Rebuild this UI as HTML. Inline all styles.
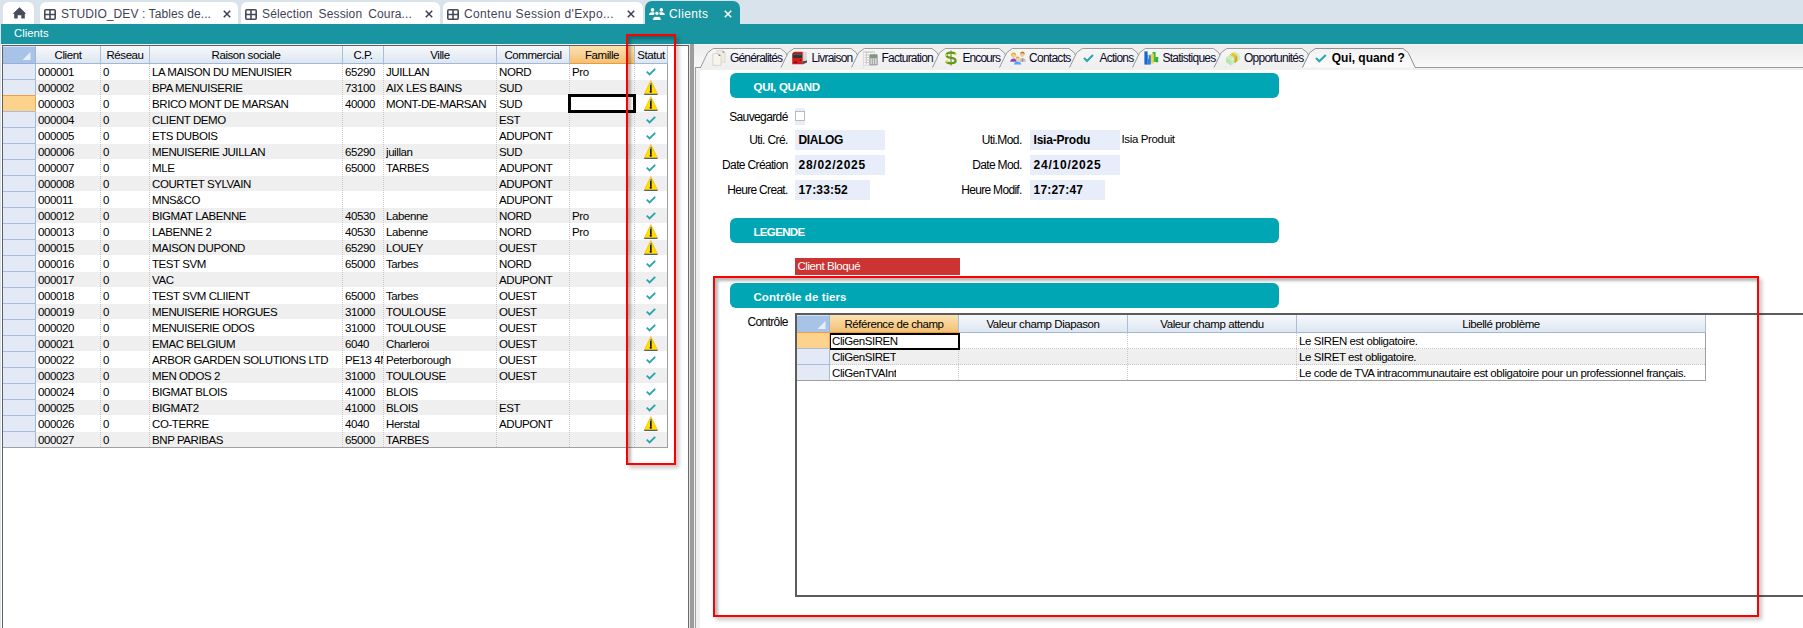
<!DOCTYPE html><html><head><meta charset="utf-8"><style>
*{box-sizing:border-box;margin:0;padding:0}
html,body{width:1803px;height:628px;overflow:hidden;background:#d9e3eb;font-family:"Liberation Sans",sans-serif;position:relative}
.a{position:absolute}
svg{display:block}
.tab{position:absolute;top:2px;height:22px;background:#fff;border-radius:6px 6px 0 0;}
.tt{position:absolute;top:7px;font-size:12.3px;color:#3e4454;white-space:nowrap;letter-spacing:0.1px}
.tx{position:absolute;top:3px;font-size:14px;color:#3e4454}
.gt{position:absolute;font-size:11.5px;letter-spacing:-0.42px;color:#000;white-space:nowrap;overflow:hidden}
.hd{position:absolute;top:46px;height:18px;background:linear-gradient(#f7f9fc,#dde6f1);border-bottom:1px solid #9fb8d6;font-size:11.5px;letter-spacing:-0.42px;text-align:center;line-height:18px;color:#000}
.vd{position:absolute;width:1px;background-image:linear-gradient(#c8c8c8 50%,transparent 50%);background-size:1px 2px}
.lbl{position:absolute;font-size:11.5px;letter-spacing:-0.3px;color:#000;text-align:right;white-space:nowrap}
.fld{position:absolute;background:#e8eef9;font-size:12px;font-weight:bold;color:#000;padding-left:3px;line-height:20px;white-space:nowrap}
.ban{position:absolute;left:730px;width:549px;height:25px;background:#00a6b4;border-radius:6px;color:#fff;font-weight:bold;font-size:12px;line-height:25px;padding-left:23px;padding-top:2px}
.rt{position:absolute;top:52px;font-size:12px;letter-spacing:-0.3px;color:#0a0a28;white-space:nowrap}
</style></head><body>
<div class="tab" style="left:3px;width:31px"></div><svg class="a" style="left:12px;top:7px" width="15" height="12" viewBox="0 0 15 12"><path d="M7.5 0.2 L14.3 6.8 L12.8 6.8 L12.8 11.6 L9.3 11.6 L9.3 8.3 L5.7 8.3 L5.7 11.6 L2.2 11.6 L2.2 6.8 L0.7 6.8 Z" fill="#484c5a"/></svg><div class="tab" style="left:40px;width:198px"></div><svg class="a" style="left:44px;top:9px" width="12" height="11" viewBox="0 0 12 11"><rect x="0.8" y="0.8" width="10.4" height="9.4" rx="1" fill="none" stroke="#454a58" stroke-width="1.6"/><path d="M6 1 V10 M1 5.5 H11" stroke="#454a58" stroke-width="1.6"/></svg><div class="a" style="left:61px;top:7px;font-size:12px;font-weight:400;letter-spacing:0.086px;color:#3e4356;white-space:nowrap;">STUDIO_DEV : Tables de...</div><svg class="a" style="left:223px;top:10px" width="8" height="8" viewBox="0 0 8 8"><path d="M0.8 0.8 L7.2 7.2 M7.2 0.8 L0.8 7.2" stroke="#3e4454" stroke-width="1.6"/></svg><div class="tab" style="left:241px;width:199px"></div><svg class="a" style="left:245px;top:9px" width="12" height="11" viewBox="0 0 12 11"><rect x="0.8" y="0.8" width="10.4" height="9.4" rx="1" fill="none" stroke="#454a58" stroke-width="1.6"/><path d="M6 1 V10 M1 5.5 H11" stroke="#454a58" stroke-width="1.6"/></svg><div class="a" style="left:262px;top:7px;font-size:12px;font-weight:400;letter-spacing:0.138px;color:#3e4356;white-space:nowrap;word-spacing:2.5px;">Sélection Session Coura...</div><svg class="a" style="left:425px;top:10px" width="8" height="8" viewBox="0 0 8 8"><path d="M0.8 0.8 L7.2 7.2 M7.2 0.8 L0.8 7.2" stroke="#3e4454" stroke-width="1.6"/></svg><div class="tab" style="left:443px;width:200px"></div><svg class="a" style="left:447px;top:9px" width="12" height="11" viewBox="0 0 12 11"><rect x="0.8" y="0.8" width="10.4" height="9.4" rx="1" fill="none" stroke="#454a58" stroke-width="1.6"/><path d="M6 1 V10 M1 5.5 H11" stroke="#454a58" stroke-width="1.6"/></svg><div class="a" style="left:464px;top:7px;font-size:12px;font-weight:400;letter-spacing:0.358px;color:#3e4356;white-space:nowrap;">Contenu Session d'Expo...</div><svg class="a" style="left:627px;top:10px" width="8" height="8" viewBox="0 0 8 8"><path d="M0.8 0.8 L7.2 7.2 M7.2 0.8 L0.8 7.2" stroke="#3e4454" stroke-width="1.6"/></svg><div class="tab" style="left:645px;top:1px;height:23px;width:95px;background:#1895a0;border-radius:7px 7px 0 0"></div><svg class="a" style="left:649px;top:8px" width="16" height="12" viewBox="0 0 16 12"><circle cx="3.5" cy="1.9" r="1.8" fill="#fff"/><circle cx="12.3" cy="1.9" r="1.8" fill="#fff"/><path d="M0 7 Q0 4.3 3 4.3 H4.2 Q5.6 4.3 6.2 5.2 Q5 6 4.9 7Z" fill="#fff"/><path d="M15.8 7 Q15.8 4.3 12.8 4.3 H11.6 Q10.2 4.3 9.6 5.2 Q10.8 6 10.9 7Z" fill="#fff"/><circle cx="7.9" cy="5.3" r="2.1" fill="#fff" stroke="#1895a0" stroke-width="0.9"/><path d="M3.6 12.5 Q3.6 8.4 6.6 8.4 H9.2 Q12.2 8.4 12.2 12.5Z" fill="#fff" stroke="#1895a0" stroke-width="0.9"/></svg><div class="a" style="left:669px;top:7px;font-size:12px;font-weight:400;letter-spacing:0.402px;color:#fff;white-space:nowrap;">Clients</div><svg class="a" style="left:724px;top:10px" width="8" height="8" viewBox="0 0 8 8"><path d="M0.8 0.8 L7.2 7.2 M7.2 0.8 L0.8 7.2" stroke="#fff" stroke-width="1.6"/></svg><div class="a" style="left:1px;top:24px;width:1802px;height:20px;background:#1895a0"></div><div class="a" style="left:14px;top:27px;font-size:11.3px;color:#fff">Clients</div><div class="a" style="left:1px;top:44px;width:688px;height:584px;background:#fff;border-top:1px solid #f4efee"></div><div class="a" style="left:2px;top:45px;width:687px;height:583px;border-left:1px solid #5f5f5f;border-top:1px solid #5f5f5f;border-right:1px solid #6a6a6a"></div><div class="a" style="left:3px;top:46px;width:33px;height:18px;background:#a8c3e8;border-top:1px solid #d4e2f6;border-bottom:1px solid #94b0d6;border-right:1px solid #9eb6d4"></div><svg class="a" style="left:22px;top:52px" width="9" height="9" viewBox="0 0 9 9"><path d="M8.5 0 V8 H0.5Z" fill="#e7eef8"/></svg><div class="hd" style="left:36px;width:65px;border-right:1px solid #a9bfd9;">Client</div><div class="hd" style="left:101px;width:49px;border-right:1px solid #a9bfd9;">Réseau</div><div class="hd" style="left:150px;width:193px;border-right:1px solid #a9bfd9;">Raison sociale</div><div class="hd" style="left:343px;width:41px;border-right:1px solid #a9bfd9;">C.P.</div><div class="hd" style="left:384px;width:113px;border-right:1px solid #a9bfd9;">Ville</div><div class="hd" style="left:497px;width:73px;border-right:1px solid #a9bfd9;">Commercial</div><div class="hd" style="left:570px;width:65px;border-right:1px solid #a9bfd9;background:linear-gradient(#fbe3b2,#f3c074);border-bottom:1px solid #f09a35;">Famille</div><div class="hd" style="left:635px;width:33px;border-right:1px solid #a9bfd9;">Statut</div><div class="a" style="left:3px;top:64px;width:33px;height:16px;background:#e3eaf5;border-bottom:1px solid #a7bddb;border-right:1px solid #a3badb"></div><div class="gt" style="left:38px;top:65px;width:62px;line-height:14px">000001</div><div class="gt" style="left:103px;top:65px;width:46px;line-height:14px">0</div><div class="gt" style="left:152px;top:65px;width:190px;line-height:14px">LA MAISON DU MENUISIER</div><div class="gt" style="left:345px;top:65px;width:38px;line-height:14px">65290</div><div class="gt" style="left:386px;top:65px;width:110px;line-height:14px">JUILLAN</div><div class="gt" style="left:499px;top:65px;width:70px;line-height:14px">NORD</div><div class="gt" style="left:572px;top:65px;width:62px;line-height:14px">Pro</div><div class="a" style="left:646px;top:68px;width:10px;height:8px"><svg width="10" height="8" viewBox="0 0 10 8"><path d="M0.8 3.6 L3.6 6.4 L9.2 0.8" fill="none" stroke="#26a5b3" stroke-width="1.9"/></svg></div><div class="a" style="left:36px;top:80px;width:631px;height:15px;background:#efefef"></div><div class="a" style="left:3px;top:80px;width:33px;height:16px;background:#e3eaf5;border-bottom:1px solid #f0a040;border-right:1px solid #a3badb"></div><div class="gt" style="left:38px;top:81px;width:62px;line-height:14px">000002</div><div class="gt" style="left:103px;top:81px;width:46px;line-height:14px">0</div><div class="gt" style="left:152px;top:81px;width:190px;line-height:14px">BPA MENUISERIE</div><div class="gt" style="left:345px;top:81px;width:38px;line-height:14px">73100</div><div class="gt" style="left:386px;top:81px;width:110px;line-height:14px">AIX LES BAINS</div><div class="gt" style="left:499px;top:81px;width:70px;line-height:14px">SUD</div><div class="a" style="left:644px;top:80px;width:14px;height:15px"><svg width="14" height="15" viewBox="0 0 14 15"><path d="M6.9 0.5 L13.5 14 L0.3 14 Z" fill="#ffdf00" stroke="#f0b400" stroke-width="0.6" stroke-linejoin="round"/><rect x="0.3" y="13.8" width="13.2" height="1.2" fill="#585c6c"/><rect x="6.1" y="3.2" width="1.5" height="7.6" fill="#050505"/><rect x="6.1" y="3" width="1.5" height="2.2" fill="#9a9a9a"/><rect x="5.8" y="10.8" width="1.9" height="1.8" fill="#050505"/></svg></div><div class="a" style="left:3px;top:96px;width:33px;height:16px;background:#fdd28c;border-bottom:1px solid #a7bddb;border-right:1px solid #f0a548"></div><div class="gt" style="left:38px;top:97px;width:62px;line-height:14px">000003</div><div class="gt" style="left:103px;top:97px;width:46px;line-height:14px">0</div><div class="gt" style="left:152px;top:97px;width:190px;line-height:14px">BRICO MONT DE MARSAN</div><div class="gt" style="left:345px;top:97px;width:38px;line-height:14px">40000</div><div class="gt" style="left:386px;top:97px;width:110px;line-height:14px">MONT-DE-MARSAN</div><div class="gt" style="left:499px;top:97px;width:70px;line-height:14px">SUD</div><div class="a" style="left:644px;top:96px;width:14px;height:15px"><svg width="14" height="15" viewBox="0 0 14 15"><path d="M6.9 0.5 L13.5 14 L0.3 14 Z" fill="#ffdf00" stroke="#f0b400" stroke-width="0.6" stroke-linejoin="round"/><rect x="0.3" y="13.8" width="13.2" height="1.2" fill="#585c6c"/><rect x="6.1" y="3.2" width="1.5" height="7.6" fill="#050505"/><rect x="6.1" y="3" width="1.5" height="2.2" fill="#9a9a9a"/><rect x="5.8" y="10.8" width="1.9" height="1.8" fill="#050505"/></svg></div><div class="a" style="left:36px;top:112px;width:631px;height:15px;background:#efefef"></div><div class="a" style="left:3px;top:112px;width:33px;height:16px;background:#e3eaf5;border-bottom:1px solid #a7bddb;border-right:1px solid #a3badb"></div><div class="gt" style="left:38px;top:113px;width:62px;line-height:14px">000004</div><div class="gt" style="left:103px;top:113px;width:46px;line-height:14px">0</div><div class="gt" style="left:152px;top:113px;width:190px;line-height:14px">CLIENT DEMO</div><div class="gt" style="left:499px;top:113px;width:70px;line-height:14px">EST</div><div class="a" style="left:646px;top:116px;width:10px;height:8px"><svg width="10" height="8" viewBox="0 0 10 8"><path d="M0.8 3.6 L3.6 6.4 L9.2 0.8" fill="none" stroke="#26a5b3" stroke-width="1.9"/></svg></div><div class="a" style="left:3px;top:128px;width:33px;height:16px;background:#e3eaf5;border-bottom:1px solid #a7bddb;border-right:1px solid #a3badb"></div><div class="gt" style="left:38px;top:129px;width:62px;line-height:14px">000005</div><div class="gt" style="left:103px;top:129px;width:46px;line-height:14px">0</div><div class="gt" style="left:152px;top:129px;width:190px;line-height:14px">ETS DUBOIS</div><div class="gt" style="left:499px;top:129px;width:70px;line-height:14px">ADUPONT</div><div class="a" style="left:646px;top:132px;width:10px;height:8px"><svg width="10" height="8" viewBox="0 0 10 8"><path d="M0.8 3.6 L3.6 6.4 L9.2 0.8" fill="none" stroke="#26a5b3" stroke-width="1.9"/></svg></div><div class="a" style="left:36px;top:144px;width:631px;height:15px;background:#efefef"></div><div class="a" style="left:3px;top:144px;width:33px;height:16px;background:#e3eaf5;border-bottom:1px solid #a7bddb;border-right:1px solid #a3badb"></div><div class="gt" style="left:38px;top:145px;width:62px;line-height:14px">000006</div><div class="gt" style="left:103px;top:145px;width:46px;line-height:14px">0</div><div class="gt" style="left:152px;top:145px;width:190px;line-height:14px">MENUISERIE JUILLAN</div><div class="gt" style="left:345px;top:145px;width:38px;line-height:14px">65290</div><div class="gt" style="left:386px;top:145px;width:110px;line-height:14px">juillan</div><div class="gt" style="left:499px;top:145px;width:70px;line-height:14px">SUD</div><div class="a" style="left:644px;top:144px;width:14px;height:15px"><svg width="14" height="15" viewBox="0 0 14 15"><path d="M6.9 0.5 L13.5 14 L0.3 14 Z" fill="#ffdf00" stroke="#f0b400" stroke-width="0.6" stroke-linejoin="round"/><rect x="0.3" y="13.8" width="13.2" height="1.2" fill="#585c6c"/><rect x="6.1" y="3.2" width="1.5" height="7.6" fill="#050505"/><rect x="6.1" y="3" width="1.5" height="2.2" fill="#9a9a9a"/><rect x="5.8" y="10.8" width="1.9" height="1.8" fill="#050505"/></svg></div><div class="a" style="left:3px;top:160px;width:33px;height:16px;background:#e3eaf5;border-bottom:1px solid #a7bddb;border-right:1px solid #a3badb"></div><div class="gt" style="left:38px;top:161px;width:62px;line-height:14px">000007</div><div class="gt" style="left:103px;top:161px;width:46px;line-height:14px">0</div><div class="gt" style="left:152px;top:161px;width:190px;line-height:14px">MLE</div><div class="gt" style="left:345px;top:161px;width:38px;line-height:14px">65000</div><div class="gt" style="left:386px;top:161px;width:110px;line-height:14px">TARBES</div><div class="gt" style="left:499px;top:161px;width:70px;line-height:14px">ADUPONT</div><div class="a" style="left:646px;top:164px;width:10px;height:8px"><svg width="10" height="8" viewBox="0 0 10 8"><path d="M0.8 3.6 L3.6 6.4 L9.2 0.8" fill="none" stroke="#26a5b3" stroke-width="1.9"/></svg></div><div class="a" style="left:36px;top:176px;width:631px;height:15px;background:#efefef"></div><div class="a" style="left:3px;top:176px;width:33px;height:16px;background:#e3eaf5;border-bottom:1px solid #a7bddb;border-right:1px solid #a3badb"></div><div class="gt" style="left:38px;top:177px;width:62px;line-height:14px">000008</div><div class="gt" style="left:103px;top:177px;width:46px;line-height:14px">0</div><div class="gt" style="left:152px;top:177px;width:190px;line-height:14px">COURTET SYLVAIN</div><div class="gt" style="left:499px;top:177px;width:70px;line-height:14px">ADUPONT</div><div class="a" style="left:644px;top:176px;width:14px;height:15px"><svg width="14" height="15" viewBox="0 0 14 15"><path d="M6.9 0.5 L13.5 14 L0.3 14 Z" fill="#ffdf00" stroke="#f0b400" stroke-width="0.6" stroke-linejoin="round"/><rect x="0.3" y="13.8" width="13.2" height="1.2" fill="#585c6c"/><rect x="6.1" y="3.2" width="1.5" height="7.6" fill="#050505"/><rect x="6.1" y="3" width="1.5" height="2.2" fill="#9a9a9a"/><rect x="5.8" y="10.8" width="1.9" height="1.8" fill="#050505"/></svg></div><div class="a" style="left:3px;top:192px;width:33px;height:16px;background:#e3eaf5;border-bottom:1px solid #a7bddb;border-right:1px solid #a3badb"></div><div class="gt" style="left:38px;top:193px;width:62px;line-height:14px">000011</div><div class="gt" style="left:103px;top:193px;width:46px;line-height:14px">0</div><div class="gt" style="left:152px;top:193px;width:190px;line-height:14px">MNS&amp;CO</div><div class="gt" style="left:499px;top:193px;width:70px;line-height:14px">ADUPONT</div><div class="a" style="left:646px;top:196px;width:10px;height:8px"><svg width="10" height="8" viewBox="0 0 10 8"><path d="M0.8 3.6 L3.6 6.4 L9.2 0.8" fill="none" stroke="#26a5b3" stroke-width="1.9"/></svg></div><div class="a" style="left:36px;top:208px;width:631px;height:15px;background:#efefef"></div><div class="a" style="left:3px;top:208px;width:33px;height:16px;background:#e3eaf5;border-bottom:1px solid #a7bddb;border-right:1px solid #a3badb"></div><div class="gt" style="left:38px;top:209px;width:62px;line-height:14px">000012</div><div class="gt" style="left:103px;top:209px;width:46px;line-height:14px">0</div><div class="gt" style="left:152px;top:209px;width:190px;line-height:14px">BIGMAT LABENNE</div><div class="gt" style="left:345px;top:209px;width:38px;line-height:14px">40530</div><div class="gt" style="left:386px;top:209px;width:110px;line-height:14px">Labenne</div><div class="gt" style="left:499px;top:209px;width:70px;line-height:14px">NORD</div><div class="gt" style="left:572px;top:209px;width:62px;line-height:14px">Pro</div><div class="a" style="left:646px;top:212px;width:10px;height:8px"><svg width="10" height="8" viewBox="0 0 10 8"><path d="M0.8 3.6 L3.6 6.4 L9.2 0.8" fill="none" stroke="#26a5b3" stroke-width="1.9"/></svg></div><div class="a" style="left:3px;top:224px;width:33px;height:16px;background:#e3eaf5;border-bottom:1px solid #a7bddb;border-right:1px solid #a3badb"></div><div class="gt" style="left:38px;top:225px;width:62px;line-height:14px">000013</div><div class="gt" style="left:103px;top:225px;width:46px;line-height:14px">0</div><div class="gt" style="left:152px;top:225px;width:190px;line-height:14px">LABENNE 2</div><div class="gt" style="left:345px;top:225px;width:38px;line-height:14px">40530</div><div class="gt" style="left:386px;top:225px;width:110px;line-height:14px">Labenne</div><div class="gt" style="left:499px;top:225px;width:70px;line-height:14px">NORD</div><div class="gt" style="left:572px;top:225px;width:62px;line-height:14px">Pro</div><div class="a" style="left:644px;top:224px;width:14px;height:15px"><svg width="14" height="15" viewBox="0 0 14 15"><path d="M6.9 0.5 L13.5 14 L0.3 14 Z" fill="#ffdf00" stroke="#f0b400" stroke-width="0.6" stroke-linejoin="round"/><rect x="0.3" y="13.8" width="13.2" height="1.2" fill="#585c6c"/><rect x="6.1" y="3.2" width="1.5" height="7.6" fill="#050505"/><rect x="6.1" y="3" width="1.5" height="2.2" fill="#9a9a9a"/><rect x="5.8" y="10.8" width="1.9" height="1.8" fill="#050505"/></svg></div><div class="a" style="left:36px;top:240px;width:631px;height:15px;background:#efefef"></div><div class="a" style="left:3px;top:240px;width:33px;height:16px;background:#e3eaf5;border-bottom:1px solid #a7bddb;border-right:1px solid #a3badb"></div><div class="gt" style="left:38px;top:241px;width:62px;line-height:14px">000015</div><div class="gt" style="left:103px;top:241px;width:46px;line-height:14px">0</div><div class="gt" style="left:152px;top:241px;width:190px;line-height:14px">MAISON DUPOND</div><div class="gt" style="left:345px;top:241px;width:38px;line-height:14px">65290</div><div class="gt" style="left:386px;top:241px;width:110px;line-height:14px">LOUEY</div><div class="gt" style="left:499px;top:241px;width:70px;line-height:14px">OUEST</div><div class="a" style="left:644px;top:240px;width:14px;height:15px"><svg width="14" height="15" viewBox="0 0 14 15"><path d="M6.9 0.5 L13.5 14 L0.3 14 Z" fill="#ffdf00" stroke="#f0b400" stroke-width="0.6" stroke-linejoin="round"/><rect x="0.3" y="13.8" width="13.2" height="1.2" fill="#585c6c"/><rect x="6.1" y="3.2" width="1.5" height="7.6" fill="#050505"/><rect x="6.1" y="3" width="1.5" height="2.2" fill="#9a9a9a"/><rect x="5.8" y="10.8" width="1.9" height="1.8" fill="#050505"/></svg></div><div class="a" style="left:3px;top:256px;width:33px;height:16px;background:#e3eaf5;border-bottom:1px solid #a7bddb;border-right:1px solid #a3badb"></div><div class="gt" style="left:38px;top:257px;width:62px;line-height:14px">000016</div><div class="gt" style="left:103px;top:257px;width:46px;line-height:14px">0</div><div class="gt" style="left:152px;top:257px;width:190px;line-height:14px">TEST SVM</div><div class="gt" style="left:345px;top:257px;width:38px;line-height:14px">65000</div><div class="gt" style="left:386px;top:257px;width:110px;line-height:14px">Tarbes</div><div class="gt" style="left:499px;top:257px;width:70px;line-height:14px">NORD</div><div class="a" style="left:646px;top:260px;width:10px;height:8px"><svg width="10" height="8" viewBox="0 0 10 8"><path d="M0.8 3.6 L3.6 6.4 L9.2 0.8" fill="none" stroke="#26a5b3" stroke-width="1.9"/></svg></div><div class="a" style="left:36px;top:272px;width:631px;height:15px;background:#efefef"></div><div class="a" style="left:3px;top:272px;width:33px;height:16px;background:#e3eaf5;border-bottom:1px solid #a7bddb;border-right:1px solid #a3badb"></div><div class="gt" style="left:38px;top:273px;width:62px;line-height:14px">000017</div><div class="gt" style="left:103px;top:273px;width:46px;line-height:14px">0</div><div class="gt" style="left:152px;top:273px;width:190px;line-height:14px">VAC</div><div class="gt" style="left:499px;top:273px;width:70px;line-height:14px">ADUPONT</div><div class="a" style="left:646px;top:276px;width:10px;height:8px"><svg width="10" height="8" viewBox="0 0 10 8"><path d="M0.8 3.6 L3.6 6.4 L9.2 0.8" fill="none" stroke="#26a5b3" stroke-width="1.9"/></svg></div><div class="a" style="left:3px;top:288px;width:33px;height:16px;background:#e3eaf5;border-bottom:1px solid #a7bddb;border-right:1px solid #a3badb"></div><div class="gt" style="left:38px;top:289px;width:62px;line-height:14px">000018</div><div class="gt" style="left:103px;top:289px;width:46px;line-height:14px">0</div><div class="gt" style="left:152px;top:289px;width:190px;line-height:14px">TEST SVM CLIIENT</div><div class="gt" style="left:345px;top:289px;width:38px;line-height:14px">65000</div><div class="gt" style="left:386px;top:289px;width:110px;line-height:14px">Tarbes</div><div class="gt" style="left:499px;top:289px;width:70px;line-height:14px">OUEST</div><div class="a" style="left:646px;top:292px;width:10px;height:8px"><svg width="10" height="8" viewBox="0 0 10 8"><path d="M0.8 3.6 L3.6 6.4 L9.2 0.8" fill="none" stroke="#26a5b3" stroke-width="1.9"/></svg></div><div class="a" style="left:36px;top:304px;width:631px;height:15px;background:#efefef"></div><div class="a" style="left:3px;top:304px;width:33px;height:16px;background:#e3eaf5;border-bottom:1px solid #a7bddb;border-right:1px solid #a3badb"></div><div class="gt" style="left:38px;top:305px;width:62px;line-height:14px">000019</div><div class="gt" style="left:103px;top:305px;width:46px;line-height:14px">0</div><div class="gt" style="left:152px;top:305px;width:190px;line-height:14px">MENUISERIE HORGUES</div><div class="gt" style="left:345px;top:305px;width:38px;line-height:14px">31000</div><div class="gt" style="left:386px;top:305px;width:110px;line-height:14px">TOULOUSE</div><div class="gt" style="left:499px;top:305px;width:70px;line-height:14px">OUEST</div><div class="a" style="left:646px;top:308px;width:10px;height:8px"><svg width="10" height="8" viewBox="0 0 10 8"><path d="M0.8 3.6 L3.6 6.4 L9.2 0.8" fill="none" stroke="#26a5b3" stroke-width="1.9"/></svg></div><div class="a" style="left:3px;top:320px;width:33px;height:16px;background:#e3eaf5;border-bottom:1px solid #a7bddb;border-right:1px solid #a3badb"></div><div class="gt" style="left:38px;top:321px;width:62px;line-height:14px">000020</div><div class="gt" style="left:103px;top:321px;width:46px;line-height:14px">0</div><div class="gt" style="left:152px;top:321px;width:190px;line-height:14px">MENUISERIE ODOS</div><div class="gt" style="left:345px;top:321px;width:38px;line-height:14px">31000</div><div class="gt" style="left:386px;top:321px;width:110px;line-height:14px">TOULOUSE</div><div class="gt" style="left:499px;top:321px;width:70px;line-height:14px">OUEST</div><div class="a" style="left:646px;top:324px;width:10px;height:8px"><svg width="10" height="8" viewBox="0 0 10 8"><path d="M0.8 3.6 L3.6 6.4 L9.2 0.8" fill="none" stroke="#26a5b3" stroke-width="1.9"/></svg></div><div class="a" style="left:36px;top:336px;width:631px;height:15px;background:#efefef"></div><div class="a" style="left:3px;top:336px;width:33px;height:16px;background:#e3eaf5;border-bottom:1px solid #a7bddb;border-right:1px solid #a3badb"></div><div class="gt" style="left:38px;top:337px;width:62px;line-height:14px">000021</div><div class="gt" style="left:103px;top:337px;width:46px;line-height:14px">0</div><div class="gt" style="left:152px;top:337px;width:190px;line-height:14px">EMAC BELGIUM</div><div class="gt" style="left:345px;top:337px;width:38px;line-height:14px">6040</div><div class="gt" style="left:386px;top:337px;width:110px;line-height:14px">Charleroi</div><div class="gt" style="left:499px;top:337px;width:70px;line-height:14px">OUEST</div><div class="a" style="left:644px;top:336px;width:14px;height:15px"><svg width="14" height="15" viewBox="0 0 14 15"><path d="M6.9 0.5 L13.5 14 L0.3 14 Z" fill="#ffdf00" stroke="#f0b400" stroke-width="0.6" stroke-linejoin="round"/><rect x="0.3" y="13.8" width="13.2" height="1.2" fill="#585c6c"/><rect x="6.1" y="3.2" width="1.5" height="7.6" fill="#050505"/><rect x="6.1" y="3" width="1.5" height="2.2" fill="#9a9a9a"/><rect x="5.8" y="10.8" width="1.9" height="1.8" fill="#050505"/></svg></div><div class="a" style="left:3px;top:352px;width:33px;height:16px;background:#e3eaf5;border-bottom:1px solid #a7bddb;border-right:1px solid #a3badb"></div><div class="gt" style="left:38px;top:353px;width:62px;line-height:14px">000022</div><div class="gt" style="left:103px;top:353px;width:46px;line-height:14px">0</div><div class="gt" style="left:152px;top:353px;width:190px;line-height:14px">ARBOR GARDEN SOLUTIONS LTD</div><div class="gt" style="left:345px;top:353px;width:38px;line-height:14px">PE13 4N</div><div class="gt" style="left:386px;top:353px;width:110px;line-height:14px">Peterborough</div><div class="gt" style="left:499px;top:353px;width:70px;line-height:14px">OUEST</div><div class="a" style="left:646px;top:356px;width:10px;height:8px"><svg width="10" height="8" viewBox="0 0 10 8"><path d="M0.8 3.6 L3.6 6.4 L9.2 0.8" fill="none" stroke="#26a5b3" stroke-width="1.9"/></svg></div><div class="a" style="left:36px;top:368px;width:631px;height:15px;background:#efefef"></div><div class="a" style="left:3px;top:368px;width:33px;height:16px;background:#e3eaf5;border-bottom:1px solid #a7bddb;border-right:1px solid #a3badb"></div><div class="gt" style="left:38px;top:369px;width:62px;line-height:14px">000023</div><div class="gt" style="left:103px;top:369px;width:46px;line-height:14px">0</div><div class="gt" style="left:152px;top:369px;width:190px;line-height:14px">MEN ODOS 2</div><div class="gt" style="left:345px;top:369px;width:38px;line-height:14px">31000</div><div class="gt" style="left:386px;top:369px;width:110px;line-height:14px">TOULOUSE</div><div class="gt" style="left:499px;top:369px;width:70px;line-height:14px">OUEST</div><div class="a" style="left:646px;top:372px;width:10px;height:8px"><svg width="10" height="8" viewBox="0 0 10 8"><path d="M0.8 3.6 L3.6 6.4 L9.2 0.8" fill="none" stroke="#26a5b3" stroke-width="1.9"/></svg></div><div class="a" style="left:3px;top:384px;width:33px;height:16px;background:#e3eaf5;border-bottom:1px solid #a7bddb;border-right:1px solid #a3badb"></div><div class="gt" style="left:38px;top:385px;width:62px;line-height:14px">000024</div><div class="gt" style="left:103px;top:385px;width:46px;line-height:14px">0</div><div class="gt" style="left:152px;top:385px;width:190px;line-height:14px">BIGMAT BLOIS</div><div class="gt" style="left:345px;top:385px;width:38px;line-height:14px">41000</div><div class="gt" style="left:386px;top:385px;width:110px;line-height:14px">BLOIS</div><div class="a" style="left:646px;top:388px;width:10px;height:8px"><svg width="10" height="8" viewBox="0 0 10 8"><path d="M0.8 3.6 L3.6 6.4 L9.2 0.8" fill="none" stroke="#26a5b3" stroke-width="1.9"/></svg></div><div class="a" style="left:36px;top:400px;width:631px;height:15px;background:#efefef"></div><div class="a" style="left:3px;top:400px;width:33px;height:16px;background:#e3eaf5;border-bottom:1px solid #a7bddb;border-right:1px solid #a3badb"></div><div class="gt" style="left:38px;top:401px;width:62px;line-height:14px">000025</div><div class="gt" style="left:103px;top:401px;width:46px;line-height:14px">0</div><div class="gt" style="left:152px;top:401px;width:190px;line-height:14px">BIGMAT2</div><div class="gt" style="left:345px;top:401px;width:38px;line-height:14px">41000</div><div class="gt" style="left:386px;top:401px;width:110px;line-height:14px">BLOIS</div><div class="gt" style="left:499px;top:401px;width:70px;line-height:14px">EST</div><div class="a" style="left:646px;top:404px;width:10px;height:8px"><svg width="10" height="8" viewBox="0 0 10 8"><path d="M0.8 3.6 L3.6 6.4 L9.2 0.8" fill="none" stroke="#26a5b3" stroke-width="1.9"/></svg></div><div class="a" style="left:3px;top:416px;width:33px;height:16px;background:#e3eaf5;border-bottom:1px solid #a7bddb;border-right:1px solid #a3badb"></div><div class="gt" style="left:38px;top:417px;width:62px;line-height:14px">000026</div><div class="gt" style="left:103px;top:417px;width:46px;line-height:14px">0</div><div class="gt" style="left:152px;top:417px;width:190px;line-height:14px">CO-TERRE</div><div class="gt" style="left:345px;top:417px;width:38px;line-height:14px">4040</div><div class="gt" style="left:386px;top:417px;width:110px;line-height:14px">Herstal</div><div class="gt" style="left:499px;top:417px;width:70px;line-height:14px">ADUPONT</div><div class="a" style="left:644px;top:416px;width:14px;height:15px"><svg width="14" height="15" viewBox="0 0 14 15"><path d="M6.9 0.5 L13.5 14 L0.3 14 Z" fill="#ffdf00" stroke="#f0b400" stroke-width="0.6" stroke-linejoin="round"/><rect x="0.3" y="13.8" width="13.2" height="1.2" fill="#585c6c"/><rect x="6.1" y="3.2" width="1.5" height="7.6" fill="#050505"/><rect x="6.1" y="3" width="1.5" height="2.2" fill="#9a9a9a"/><rect x="5.8" y="10.8" width="1.9" height="1.8" fill="#050505"/></svg></div><div class="a" style="left:36px;top:432px;width:631px;height:15px;background:#efefef"></div><div class="a" style="left:3px;top:432px;width:33px;height:16px;background:#e3eaf5;border-bottom:1px solid #a7bddb;border-right:1px solid #a3badb"></div><div class="gt" style="left:38px;top:433px;width:62px;line-height:14px">000027</div><div class="gt" style="left:103px;top:433px;width:46px;line-height:14px">0</div><div class="gt" style="left:152px;top:433px;width:190px;line-height:14px">BNP PARIBAS</div><div class="gt" style="left:345px;top:433px;width:38px;line-height:14px">65000</div><div class="gt" style="left:386px;top:433px;width:110px;line-height:14px">TARBES</div><div class="a" style="left:646px;top:436px;width:10px;height:8px"><svg width="10" height="8" viewBox="0 0 10 8"><path d="M0.8 3.6 L3.6 6.4 L9.2 0.8" fill="none" stroke="#26a5b3" stroke-width="1.9"/></svg></div><div class="vd" style="left:100px;top:64px;height:383px"></div><div class="vd" style="left:149px;top:64px;height:383px"></div><div class="vd" style="left:342px;top:64px;height:383px"></div><div class="vd" style="left:383px;top:64px;height:383px"></div><div class="vd" style="left:496px;top:64px;height:383px"></div><div class="vd" style="left:569px;top:64px;height:383px"></div><div class="vd" style="left:634px;top:64px;height:383px"></div><div class="a" style="left:667px;top:64px;width:1px;height:384px;background:#a0a0a0"></div><div class="a" style="left:3px;top:447px;width:665px;height:1px;background:#a0a0a0"></div><div class="a" style="left:568px;top:94px;width:68px;height:19px;border:3px solid #000"></div><div class="a" style="left:689px;top:44px;width:1px;height:584px;background:#e6e6e6"></div><div class="a" style="left:690px;top:44px;width:4px;height:584px;background:#9c9c9c"></div><div class="a" style="left:694px;top:44px;width:1109px;height:584px;background:#f0f0f0"></div><div class="a" style="left:694px;top:44px;width:1109px;height:23px;background:linear-gradient(#ececec,#f8f8f8);border-top:1px solid #f8f3f3"></div><div class="a" style="left:695px;top:67px;width:1px;height:561px;background:#a0a0a0"></div><div class="a" style="left:700px;top:70px;width:1103px;height:558px;background:#fff"></div><svg class="a" style="left:694px;top:44px" width="1109" height="26" viewBox="694 44 1109 26"><defs><linearGradient id="tg" x1="0" y1="0" x2="0" y2="1"><stop offset="0" stop-color="#f6f6f6"/><stop offset="1" stop-color="#efefef"/></linearGradient><linearGradient id="ta" x1="0" y1="0" x2="0" y2="1"><stop offset="0" stop-color="#f2f2f2"/><stop offset="1" stop-color="#fbfbfb"/></linearGradient></defs><path d="M700.5,67.5 L707.7,52.6 L713.3,48.5 H780.5 L785.7,52.6 L792.7,67.5 Z" fill="url(#tg)"/><path d="M700.5,67.5 L707.7,52.6 L713.3,48.5 H780.5 L785.7,52.6 L792.7,67.5" fill="none" stroke="#9a9a9a" stroke-width="1"/><path d="M781,67.5 L788.2,52.6 L793.8,48.5 H851.0 L856.2,52.6 L863.2,67.5 Z" fill="url(#tg)"/><path d="M781,67.5 L788.2,52.6 L793.8,48.5 H851.0 L856.2,52.6 L863.2,67.5" fill="none" stroke="#9a9a9a" stroke-width="1"/><path d="M851.5,67.5 L858.7,52.6 L864.3,48.5 H932.0 L937.2,52.6 L944.2,67.5 Z" fill="url(#tg)"/><path d="M851.5,67.5 L858.7,52.6 L864.3,48.5 H932.0 L937.2,52.6 L944.2,67.5" fill="none" stroke="#9a9a9a" stroke-width="1"/><path d="M932.5,67.5 L939.7,52.6 L945.3,48.5 H999.0 L1004.2,52.6 L1011.2,67.5 Z" fill="url(#tg)"/><path d="M932.5,67.5 L939.7,52.6 L945.3,48.5 H999.0 L1004.2,52.6 L1011.2,67.5" fill="none" stroke="#9a9a9a" stroke-width="1"/><path d="M999.5,67.5 L1006.7,52.6 L1012.3,48.5 H1069.0 L1074.2,52.6 L1081.2,67.5 Z" fill="url(#tg)"/><path d="M999.5,67.5 L1006.7,52.6 L1012.3,48.5 H1069.0 L1074.2,52.6 L1081.2,67.5" fill="none" stroke="#9a9a9a" stroke-width="1"/><path d="M1069.5,67.5 L1076.7,52.6 L1082.3,48.5 H1132.0 L1137.2,52.6 L1144.2,67.5 Z" fill="url(#tg)"/><path d="M1069.5,67.5 L1076.7,52.6 L1082.3,48.5 H1132.0 L1137.2,52.6 L1144.2,67.5" fill="none" stroke="#9a9a9a" stroke-width="1"/><path d="M1132.5,67.5 L1139.7,52.6 L1145.3,48.5 H1213.5 L1218.7,52.6 L1225.7,67.5 Z" fill="url(#tg)"/><path d="M1132.5,67.5 L1139.7,52.6 L1145.3,48.5 H1213.5 L1218.7,52.6 L1225.7,67.5" fill="none" stroke="#9a9a9a" stroke-width="1"/><path d="M1214,67.5 L1221.2,52.6 L1226.8,48.5 H1302.0 L1307.2,52.6 L1314.2,67.5 Z" fill="url(#tg)"/><path d="M1214,67.5 L1221.2,52.6 L1226.8,48.5 H1302.0 L1307.2,52.6 L1314.2,67.5" fill="none" stroke="#9a9a9a" stroke-width="1"/><path d="M1302.5,67.5 L1309.7,52.6 L1315.3,48.5 H1403 L1408.2,52.6 L1415.2,67.5 Z" fill="url(#ta)"/><path d="M1302.5,67.5 L1309.7,52.6 L1315.3,48.5 H1403 L1408.2,52.6 L1415.2,67.5" fill="none" stroke="#8e8e8e" stroke-width="1"/><path d="M695,67.5 H701 M1415,67.5 H1803" stroke="#9a9a9a" stroke-width="1"/></svg><svg class="a" style="left:712px;top:50px" width="14" height="16" viewBox="0 0 14 16"><path d="M4.8 0.4 H10.8 L13 2.6 V12.2 H4.8Z" fill="#f1ece3" stroke="#d6d0c6" stroke-width="0.7"/><path d="M10.6 0.6 V2.8 H12.8" fill="#8a8a8a"/><path d="M0.8 3.6 H6.8 L9 5.8 V15.4 H0.8Z" fill="#f7f4ea" stroke="#d2ccc2" stroke-width="0.7"/><path d="M6.6 3.8 V6 H8.8Z" fill="#7a7a7a"/></svg><div class="a" style="left:730px;top:51px;font-size:12px;font-weight:400;letter-spacing:-0.825px;color:#0a0a28;white-space:nowrap;">Généralités</div><svg class="a" style="left:792px;top:51px" width="16" height="14" viewBox="0 0 16 14"><path d="M10.5 0.4 L15 1.6 V10.8 L10.5 12Z" fill="#cbcbcb"/><path d="M12 1 L15 1.8 V10.6 L12 11.2Z" fill="#dcdcdc"/><path d="M0.2 3 Q1 0.8 3 0.8 H10.7 V13.2 H0.2 Z" fill="#d51d1d"/><rect x="0.8" y="2.6" width="9.2" height="4.4" fill="#2e3334"/><rect x="1" y="3" width="8.8" height="1.2" fill="#555"/><rect x="2" y="10.6" width="3" height="1.2" fill="#5a0e0e"/><circle cx="8.6" cy="9.2" r="0.8" fill="#4a0c0c"/><path d="M10.5 10.2 L15 9.4 V11.6 L10.5 13.4Z" fill="#4f4f4f"/></svg><div class="a" style="left:811.5px;top:51px;font-size:12px;font-weight:400;letter-spacing:-0.781px;color:#0a0a28;white-space:nowrap;">Livraison</div><svg class="a" style="left:863px;top:51px" width="15" height="15" viewBox="0 0 15 15"><rect x="0.5" y="0.4" width="11" height="13.8" fill="#f6f6f6" stroke="#d0d0d0" stroke-width="0.7"/><path d="M1.5 1.5H10.5M1.5 4H6M1.5 6.5H6M1.5 9H6M1.5 11.5H6M3.5 1V13.5" stroke="#c4c4c4" stroke-width="0.8"/><rect x="6.4" y="3.2" width="8.2" height="11" rx="0.8" fill="#8c8c8c"/><rect x="7.3" y="4.2" width="6.4" height="2" fill="#6fa66a"/><rect x="7.3" y="7.2" width="6.4" height="6.2" fill="#d6d6d6"/><path d="M9.4 7.2V13.4M11.5 7.2V13.4" stroke="#9a9a9a" stroke-width="0.7"/></svg><div class="a" style="left:881.5px;top:51px;font-size:12px;font-weight:400;letter-spacing:-0.776px;color:#0a0a28;white-space:nowrap;">Facturation</div><svg class="a" style="left:944px;top:50px" width="14" height="16" viewBox="0 0 14 16"><path d="M7 0.5 V15.5" stroke="#8f8f5a" stroke-width="1.3"/><path d="M11.6 4.4 Q10.8 2.6 7 2.6 Q2.6 2.6 2.6 5.2 Q2.6 7.4 7 7.8 Q11.6 8.2 11.6 10.6 Q11.6 13.3 7 13.3 Q3 13.3 2.2 11.3" fill="none" stroke="#5f9a10" stroke-width="2.3"/><circle cx="2.8" cy="11.4" r="1.2" fill="#e0e020"/><circle cx="11.4" cy="4.3" r="1.1" fill="#e8e020"/><circle cx="2.6" cy="5" r="1" fill="#d8e020"/></svg><div class="a" style="left:962.5px;top:51px;font-size:12px;font-weight:400;letter-spacing:-0.933px;color:#0a0a28;white-space:nowrap;">Encours</div><svg class="a" style="left:1010px;top:51px" width="16" height="14" viewBox="0 0 16 14"><path d="M9.5 10.8 Q9.6 7.2 12.3 7 Q15.6 7.2 15.8 10.8Z" fill="#b9bdcb"/><path d="M12 7.4 L12.6 7.4 L12.8 10.8 L11.9 10.8Z" fill="#e05060"/><circle cx="12.3" cy="3.6" r="2.3" fill="#f2c89a"/><path d="M10 3.2 Q10.4 0.4 12.4 0.4 Q14.8 0.6 14.6 3.4 Q13.5 1.8 11 2.6Z" fill="#b07a22"/><path d="M0.2 10.8 Q0.4 7.6 3.6 7.4 Q6.6 7.6 6.8 10.8Z" fill="#8a46c2"/><circle cx="3.6" cy="4.8" r="2.2" fill="#f4cc9a"/><path d="M1 5.8 Q0.6 1.6 3.6 1.6 Q6.6 1.6 6.2 5.8 Q5.6 3.2 3.6 3 Q1.8 3.2 1 5.8Z" fill="#e8b22c"/><path d="M4 13.4 Q4.2 10.6 7.6 10.4 Q11 10.6 11.2 13.4Z" fill="#4aaaf2"/><circle cx="7.6" cy="8" r="2" fill="#f4cc9a"/><path d="M5.6 8 Q5.6 5.6 7.6 5.6 Q9.6 5.6 9.6 8 Q8.8 6.6 7.6 6.8 Q6.4 6.6 5.6 8Z" fill="#d8a030"/></svg><div class="a" style="left:1029px;top:51px;font-size:12px;font-weight:400;letter-spacing:-0.732px;color:#0a0a28;white-space:nowrap;">Contacts</div><svg class="a" style="left:1083px;top:54px" width="11" height="9" viewBox="0 0 11 9"><path d="M1 4 L4 7 L10 1" fill="none" stroke="#2aa6b3" stroke-width="2.1"/></svg><div class="a" style="left:1099.5px;top:51px;font-size:12px;font-weight:400;letter-spacing:-0.766px;color:#0a0a28;white-space:nowrap;">Actions</div><svg class="a" style="left:1144px;top:51px" width="15" height="14" viewBox="0 0 15 14"><rect x="8.6" y="1" width="3" height="10" fill="#3cbc3c"/><rect x="11.2" y="6" width="3" height="5.2" fill="#34b034"/><rect x="5.4" y="3" width="4.4" height="9.6" fill="#e6d848"/><rect x="0.4" y="0.4" width="3.2" height="13.2" fill="#1a66d0"/><rect x="3.4" y="4.4" width="3.4" height="9.2" fill="#2e7ce0"/><rect x="4" y="5" width="1" height="3" fill="#9cc4f2"/></svg><div class="a" style="left:1162.5px;top:51px;font-size:12px;font-weight:400;letter-spacing:-0.754px;color:#0a0a28;white-space:nowrap;">Statistiques</div><svg class="a" style="left:1226px;top:51px" width="14" height="15" viewBox="0 0 14 15"><path d="M0 6.2 L8.4 0.4 L13.9 3.6 L13.9 8.6 L5.2 14.4 L0 11.2Z" fill="#c6eec2"/><path d="M0 6.2 L5.2 9.4 L13.9 3.6" fill="none" stroke="#e6f8e4" stroke-width="0.8"/><path d="M3.8 3.8 L6.6 1.8 L11.2 4.6 L11.2 10.2 L8.6 12 L8.6 6.6Z" fill="#f4c21e"/><path d="M8.6 6.6 L11.2 4.8 V10.2 L8.6 12Z" fill="#d9a430"/><path d="M0 6.2 L5.2 9.4 V14.4 L0 11.2Z" fill="#b6e6b0"/></svg><div class="a" style="left:1244px;top:51px;font-size:12px;font-weight:400;letter-spacing:-0.768px;color:#0a0a28;white-space:nowrap;">Opportunités</div><svg class="a" style="left:1315px;top:54px" width="12" height="9" viewBox="0 0 12 9"><path d="M1 4 L4.3 7.2 L10.8 1" fill="none" stroke="#2aa6b3" stroke-width="2.1"/></svg><div class="a" style="left:1331.8px;top:51px;font-size:12px;font-weight:700;letter-spacing:-0.027px;color:#000;white-space:nowrap;">Qui, quand ?</div><div class="ban" style="top:73px"></div><div class="a" style="left:753.5px;top:81px;font-size:11.5px;font-weight:700;letter-spacing:-0.280px;color:#fff;white-space:nowrap;">QUI, QUAND</div><div class="a" style="left:729.2px;top:109.6px;font-size:12px;font-weight:400;letter-spacing:-0.622px;color:#000;white-space:nowrap;">Sauvegardé</div><div class="a" style="left:795px;top:108px;width:10px;height:17px;background:#e8eef9"></div><div class="a" style="left:795px;top:111px;width:10px;height:10px;background:#fff;border:1px solid #bcbcbc"></div><div class="a" style="left:749.2px;top:133px;font-size:12px;font-weight:400;letter-spacing:-0.613px;color:#000;white-space:nowrap;">Uti. Cré.</div><div class="a" style="left:795px;top:130px;width:90px;height:20px;background:#e8eef9"></div><div class="a" style="left:798.5px;top:133px;font-size:12px;font-weight:700;letter-spacing:-0.345px;color:#000;white-space:nowrap;">DIALOG</div><div class="a" style="left:722.1px;top:158px;font-size:12px;font-weight:400;letter-spacing:-0.650px;color:#000;white-space:nowrap;">Date Création</div><div class="a" style="left:795px;top:155px;width:90px;height:20px;background:#e8eef9"></div><div class="a" style="left:798.5px;top:158px;font-size:12px;font-weight:700;letter-spacing:0.734px;color:#000;white-space:nowrap;">28/02/2025</div><div class="a" style="left:727.2px;top:183px;font-size:12px;font-weight:400;letter-spacing:-0.684px;color:#000;white-space:nowrap;">Heure Creat.</div><div class="a" style="left:795px;top:180px;width:75px;height:20px;background:#e8eef9"></div><div class="a" style="left:798.5px;top:183px;font-size:12px;font-weight:700;letter-spacing:0.169px;color:#000;white-space:nowrap;">17:33:52</div><div class="a" style="left:981.7px;top:133px;font-size:12px;font-weight:400;letter-spacing:-0.586px;color:#000;white-space:nowrap;">Uti.Mod.</div><div class="a" style="left:1030px;top:130px;width:90px;height:20px;background:#e8eef9"></div><div class="a" style="left:1033.5px;top:133px;font-size:12px;font-weight:700;letter-spacing:-0.199px;color:#000;white-space:nowrap;">Isia-Produ</div><div class="a" style="left:972.2px;top:158px;font-size:12px;font-weight:400;letter-spacing:-0.651px;color:#000;white-space:nowrap;">Date Mod.</div><div class="a" style="left:1030px;top:155px;width:90px;height:20px;background:#e8eef9"></div><div class="a" style="left:1033.5px;top:158px;font-size:12px;font-weight:700;letter-spacing:0.784px;color:#000;white-space:nowrap;">24/10/2025</div><div class="a" style="left:961.2px;top:183px;font-size:12px;font-weight:400;letter-spacing:-0.684px;color:#000;white-space:nowrap;">Heure Modif.</div><div class="a" style="left:1030px;top:180px;width:75px;height:20px;background:#e8eef9"></div><div class="a" style="left:1033.5px;top:183px;font-size:12px;font-weight:700;letter-spacing:0.207px;color:#000;white-space:nowrap;">17:27:47</div><div class="a" style="left:1121.5px;top:133px;font-size:11.5px;font-weight:400;letter-spacing:-0.361px;color:#000;white-space:nowrap;">Isia Produit</div><div class="ban" style="top:218px"></div><div class="a" style="left:753.4px;top:226px;font-size:11.5px;font-weight:700;letter-spacing:-0.628px;color:#fff;white-space:nowrap;">LEGENDE</div><div class="a" style="left:795px;top:258px;width:165px;height:17px;background:#cc3434"></div><div class="a" style="left:797.5px;top:260px;font-size:11.5px;font-weight:400;letter-spacing:-0.439px;color:#fff;white-space:nowrap;">Client Bloqué</div><div class="ban" style="top:283px"></div><div class="a" style="left:753.4px;top:291px;font-size:11.5px;font-weight:700;letter-spacing:0.106px;color:#fff;white-space:nowrap;">Contrôle de tiers</div><div class="a" style="left:747.5px;top:315px;font-size:12px;font-weight:400;letter-spacing:-0.645px;color:#000;white-space:nowrap;">Contrôle</div><div class="a" style="left:795px;top:313px;width:1008px;height:284px;border-left:2px solid #5c5c5c;border-top:2px solid #5c5c5c;border-bottom:2px solid #5c5c5c;background:#fff"></div><div class="a" style="left:797px;top:315px;width:33px;height:18px;background:#a8c3e8;border-top:1px solid #d4e2f6;border-bottom:1px solid #f0a040;border-right:1px solid #9eb6d4"></div><svg class="a" style="left:817px;top:321px" width="9" height="9" viewBox="0 0 9 9"><path d="M8.5 0 V8 H0.5Z" fill="#e7eef8"/></svg><div class="hd" style="top:315px;left:830px;width:129px;border-right:1px solid #a9bfd9;background:linear-gradient(#fbe3b2,#f3c074);border-bottom:1px solid #f09a35;">Référence de champ</div><div class="hd" style="top:315px;left:959px;width:169px;border-right:1px solid #a9bfd9;">Valeur champ Diapason</div><div class="hd" style="top:315px;left:1128px;width:169px;border-right:1px solid #a9bfd9;">Valeur champ attendu</div><div class="hd" style="top:315px;left:1297px;width:409px;border-right:1px solid #a9bfd9;">Libellé problème</div><div class="a" style="left:797px;top:333px;width:33px;height:16px;background:#fdd28c;border-bottom:1px solid #a7bddb;border-right:1px solid #f0a548"></div><div class="gt" style="left:832px;top:334px;line-height:14px">CliGenSIREN</div><div class="gt" style="left:1299px;top:334px;line-height:14px">Le SIREN est obligatoire.</div><div class="a" style="left:830px;top:349px;width:875px;height:16px;background:#efefef"></div><div class="a" style="left:797px;top:349px;width:33px;height:16px;background:#e3eaf5;border-bottom:1px solid #a7bddb;border-right:1px solid #a3badb"></div><div class="gt" style="left:832px;top:350px;line-height:14px">CliGenSIRET</div><div class="gt" style="left:1299px;top:350px;line-height:14px">Le SIRET est obligatoire.</div><div class="a" style="left:797px;top:365px;width:33px;height:16px;background:#e3eaf5;border-bottom:1px solid #a7bddb;border-right:1px solid #a3badb"></div><div class="gt" style="left:832px;top:366px;line-height:14px">CliGenTVAInt</div><div class="gt" style="left:1299px;top:366px;line-height:14px">Le code de TVA intracommunautaire est obligatoire pour un professionnel français.</div><div class="a" style="left:830px;top:348px;width:875px;height:1px;background-image:linear-gradient(90deg,#c8c8c8 50%,transparent 50%);background-size:2px 1px"></div><div class="a" style="left:830px;top:364px;width:875px;height:1px;background-image:linear-gradient(90deg,#c8c8c8 50%,transparent 50%);background-size:2px 1px"></div><div class="vd" style="left:958px;top:333px;height:47px"></div><div class="vd" style="left:1127px;top:333px;height:47px"></div><div class="vd" style="left:1296px;top:333px;height:47px"></div><div class="a" style="left:1705px;top:333px;width:1px;height:48px;background:#a0a0a0"></div><div class="a" style="left:797px;top:380px;width:909px;height:1px;background:#a0a0a0"></div><div class="a" style="left:830px;top:333px;width:130px;height:17px;border:2px solid #000;border-left-width:1px"></div><div class="a" style="left:626px;top:34px;width:50px;height:431px;border:2px solid #f00;box-shadow:3px 3px 4px rgba(0,0,0,0.22), inset 3px 3px 3px rgba(0,0,0,0.28)"></div><div class="a" style="left:713px;top:276px;width:1046px;height:341px;border:2px solid #f00;box-shadow:3px 3px 4px rgba(0,0,0,0.22), inset 3px 3px 3px rgba(0,0,0,0.28)"></div></body></html>
